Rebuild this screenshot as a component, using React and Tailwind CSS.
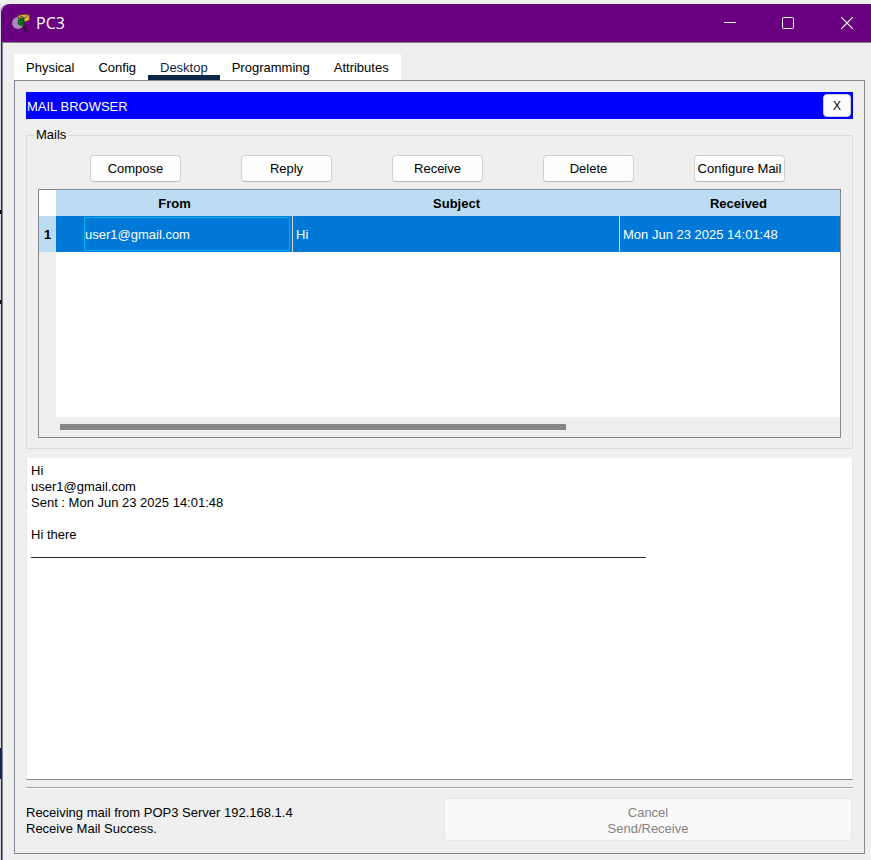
import React from "react";

const TABS = ["Physical", "Config", "Desktop", "Programming", "Attributes"];
const ACTIONS = ["Compose", "Reply", "Receive", "Delete", "Configure Mail"];

const MESSAGE = [
  "Hi",
  "user1@gmail.com",
  "Sent : Mon Jun 23 2025 14:01:48",
  "",
  "Hi there",
  "_".repeat(85),
].join("\n");

function AppIcon() {
  return (
    <svg width="20" height="22" viewBox="0 0 20 22" className="shrink-0" aria-hidden="true">
      <path d="M12 15 L14 16 L15 20" fill="none" stroke="#1c1c1c" strokeWidth="1.800" />
      <circle cx="7" cy="11" r="6" fill="#a78bb4" />
      <path d="M6 3 L18 2 L19 8 L14 10 L8 6 Z" fill="#dfae50" stroke="#4a3208" strokeWidth="0.700" />
      <path d="M7 3 L14 6 L18 2" fill="none" stroke="#4a3208" strokeWidth="0.800" />
      <path d="M8 6 L13 6 L13 13 L11 14 L7 12 Z" fill="#0c9a22" stroke="#064a0c" strokeWidth="0.700" />
      <path d="M10 6 V13 M12 6 V13 M7 8.500 H13 M7 11 H13" stroke="#043808" strokeWidth="0.600" />
    </svg>
  );
}

function TitleBar() {
  return (
    <header className="flex h-[39px] items-center rounded-tl-lg border-b border-[#82848f] bg-[#69007f] pl-[9px] text-white">
      <AppIcon />
      <h1 className="ml-[5px] flex-1 font-['Open_Sans','Noto_Sans',sans-serif] text-base">PC3</h1>
      <button aria-label="Minimize" className="flex h-full w-[58px] items-center justify-center">
        <svg width="12" height="12"><path d="M0 5.500H12" stroke="white" /></svg>
      </button>
      <button aria-label="Maximize" className="flex h-full w-[58px] items-center justify-center">
        <svg width="12" height="12"><rect x="0.500" y="0.500" width="11" height="11" rx="1" fill="none" stroke="white" /></svg>
      </button>
      <button aria-label="Close window" className="flex h-full w-[54px] items-center justify-center pl-[6px]">
        <svg width="12" height="12"><path d="M0 0L12 12M12 0L0 12" stroke="white" strokeWidth="1.200" /></svg>
      </button>
    </header>
  );
}

function Mails() {
  return (
    <section aria-label="Mails" className="mt-2 flex flex-col">
      <fieldset className="h-[322px] min-w-0 border border-[#dcdcdc] px-[11px] pb-[10px]">
        <legend className="-ml-1 px-[2px] leading-4">Mails</legend>
        <div className="grid grid-cols-5 justify-items-center pt-3 pr-[26px] pl-[22px]">
          {ACTIONS.map((a) => (
            <button key={a} className="h-[27px] w-[91px] rounded border border-[#d0d0d0] border-b-[#b8b8b8] bg-[#fdfdfd] whitespace-nowrap">
              {a}
            </button>
          ))}
        </div>
        <div className="mt-[7px] flex h-[249px] flex-col overflow-hidden border border-[#828790] bg-white">
          <div className="flex flex-1 flex-col overflow-hidden">
            <table className="w-[818px] shrink-0 table-fixed border-collapse">
              <colgroup>
                <col className="w-[17px]" />
                <col className="w-[237px]" />
                <col className="w-[327px]" />
                <col className="w-[237px]" />
              </colgroup>
              <thead>
                <tr className="h-[26px] bg-[#bbdcf3]">
                  <td className="bg-white" />
                  <th className="pt-[2px]">From</th>
                  <th className="pt-[2px]">Subject</th>
                  <th className="pt-[2px]">Received</th>
                </tr>
              </thead>
              <tbody>
                <tr className="h-9 bg-[#0078d7] text-white">
                  <th className="bg-[#bbdcf3] pt-[2px] text-black">1</th>
                  <td className="p-0">
                    <div className="flex h-9 border-r border-[#d8d8d8] py-px pr-[2px] pl-7">
                      <span className="flex flex-1 items-center border border-[#00b4ea] pt-[2px]">user1@gmail.com</span>
                    </div>
                  </td>
                  <td className="p-0">
                    <div className="flex h-9 items-center border-r border-[#d8d8d8] pt-[2px] pl-[3px]">Hi</div>
                  </td>
                  <td className="pt-[2px] pl-[3px]">Mon Jun 23 2025 14:01:48</td>
                </tr>
              </tbody>
            </table>
            <div className="w-[17px] flex-1 bg-[#efefef]" />
          </div>
          <div className="flex h-5 items-center bg-[#efefef] pl-[21px]">
            <div className="h-[6px] w-[506px] bg-[#858585]" />
          </div>
        </div>
      </fieldset>
    </section>
  );
}

export default function App() {
  return (
    <div className="flex min-h-screen bg-[#eeeeee] pt-1 font-['Liberation_Sans',Arial,sans-serif] text-[13px] leading-4 text-black">
      <div aria-hidden="true" className="flex w-px flex-col bg-[#d5d5dc]">
        <div className="mt-[206px] h-1 bg-black" />
        <div className="mt-[86px] h-1 bg-black" />
        <div className="mt-[444px] h-[31px] bg-[#12204f]" />
      </div>
      <main className="flex min-w-0 flex-1 flex-col rounded-tl-lg border-l border-[#69007f] bg-[#efefef]">
        <TitleBar />
        <div className="flex flex-1 flex-col border-l border-[#82848f] pt-[11px] pr-[6px] pb-[6px] pl-[11px]">
          <nav className="flex h-[26px] self-start bg-white" role="tablist">
            {TABS.map((t) => (
              <button
                key={t}
                role="tab"
                aria-selected={t === "Desktop"}
                className={
                  t === "Desktop"
                    ? "border-b-[5px] border-[#0d2748] px-3 pt-[6px] text-[#0d2748]"
                    : "px-3 pt-[2px]"
                }
              >
                {t}
              </button>
            ))}
          </nav>
          <div className="flex flex-1 flex-col border border-[#828790] px-[11px] pt-[11px] pb-3">
            <div className="flex h-[27px] items-center justify-between bg-[#0000ff] pr-[2px] pl-px text-white">
              <h2 className="pt-[2px]">MAIL BROWSER</h2>
              <button aria-label="Close mail browser" className="h-[23px] w-7 rounded border border-[#d0d0d0] bg-[#fdfdfd] text-xs text-black">
                X
              </button>
            </div>
            <Mails />
            <textarea
              readOnly
              aria-label="Message"
              defaultValue={MESSAGE}
              className="mt-[9px] min-h-[322px] w-full flex-1 resize-none border-x border-b border-x-[#e6e6e6] border-b-[#868686] bg-white px-1 pt-[5px] outline-none"
            />
            <hr className="mt-[7px] h-[2px] border-t border-b border-t-[#a0a0a0] border-b-white" />
            <footer className="mt-[9px] flex items-center justify-between">
              <p role="status" className="pt-[2px]">
                Receiving mail from POP3 Server 192.168.1.4
                <br />
                Receive Mail Success.
              </p>
              <button disabled className="mr-px h-[43px] w-[408px] rounded border border-[#e8e8e8] bg-[#f9f9f9] pt-[2px] text-[#838383]">
                Cancel
                <br />
                Send/Receive
              </button>
            </footer>
          </div>
        </div>
      </main>
    </div>
  );
}
